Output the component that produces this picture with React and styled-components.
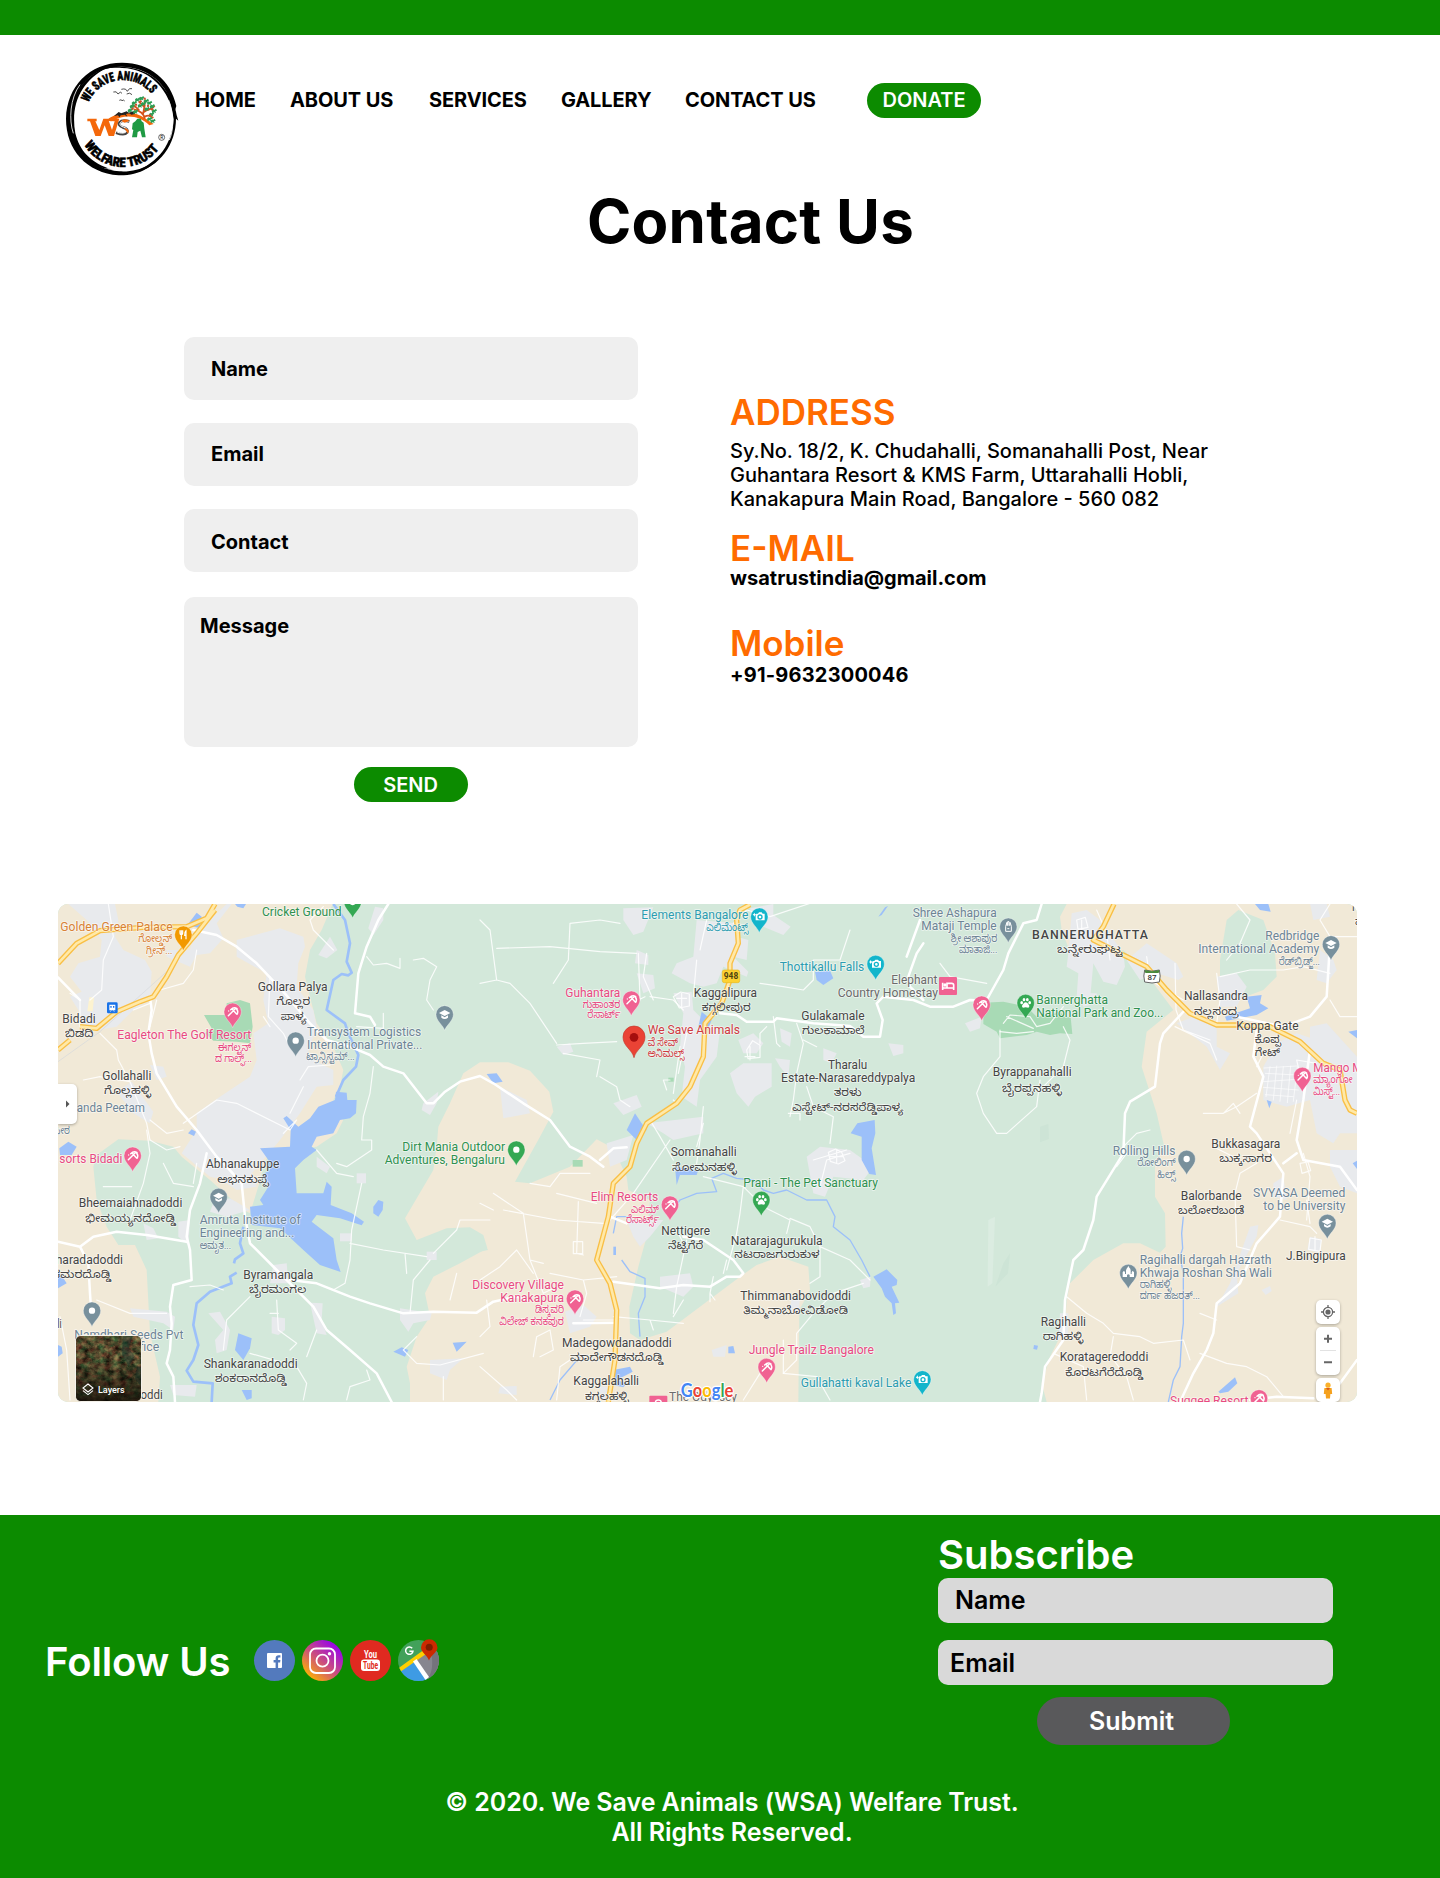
import React from "react";
import styled, { createGlobalStyle, css } from "styled-components";

const GREEN = "#0c8b00";
const ORANGE = "#ff6b00";

const GlobalStyle = createGlobalStyle`
  *, *::before, *::after { box-sizing: border-box; }
  body {
    margin: 0;
    background: #fff;
    color: #000;
    font-family: Inter, "Liberation Sans", sans-serif;
  }
  h1, h2, p { margin: 0; }
  button { border: 0; padding: 0; font-family: inherit; }
`;

/* ---------- page ---------- */

const Page = styled.div`
  display: flex;
  flex-direction: column;
  width: 1440px;
  height: 1878px;
  overflow: hidden;
`;

const TopBar = styled.div`
  flex: none;
  height: 35px;
  background: ${GREEN};
`;

const Header = styled.header`
  display: flex;
  flex: none;
  align-items: flex-start;
  height: 150px;
  padding: 26px 0 0 65px;
`;

const Nav = styled.nav`
  display: grid;
  grid-template-columns: 95px 139px 132px 124px 182px 114px;
  align-items: center;
  margin: 22px 0 0 16px;
`;

const NavLink = styled.a`
  padding-bottom: 2px;
  font-size: 20px;
  font-weight: 700;
  letter-spacing: -0.1px;
  line-height: 24px;
  white-space: nowrap;
`;

const PillButton = styled.button`
  width: 114px;
  height: 35px;
  padding-bottom: ${(p) => (p.$raised ? 2 : 0)}px;
  border-radius: 17.5px;
  background: ${GREEN};
  color: #fff;
  font-size: 20px;
  font-weight: 600;
  line-height: 24px;
`;

const PageTitle = styled.h1`
  flex: none;
  padding-left: 61px;
  font-size: 60px;
  font-weight: 700;
  letter-spacing: 0.25px;
  line-height: 73px;
  text-align: center;
`;

const ContactSection = styled.section`
  display: grid;
  flex: none;
  grid-template-columns: 454px 1fr;
  column-gap: 92px;
  height: 567px;
  padding: 79px 200px 0 184px;
`;

const ContactForm = styled.form`
  display: flex;
  flex-direction: column;
  gap: 23px;
`;

const Field = styled.label`
  display: block;
  height: ${(p) => (p.$area ? 150 : 63)}px;
  margin-top: ${(p) => (p.$area ? 2 : 0)}px;
  padding: ${(p) => p.$top}px 0 0 ${(p) => (p.$area ? 16 : 27)}px;
  border-radius: 10px;
  background: #efefef;
  font-size: 20px;
  font-weight: 700;
  line-height: 24px;
`;

const SendButton = styled(PillButton)`
  align-self: center;
  margin-top: -3px;
  padding-right: 1px;
`;

const Details = styled.div`
  padding-top: 58px;
`;

const DetailHeading = styled.h2`
  margin-bottom: ${(p) => p.$gap}px;
  color: ${ORANGE};
  font-size: 35px;
  font-weight: 600;
  line-height: 34px;
`;

const DetailText = styled.p`
  width: 500px;
  margin-bottom: ${(p) => p.$after}px;
  font-size: 20px;
  font-weight: ${(p) => (p.$strong ? 700 : 500)};
  letter-spacing: ${(p) => p.$spacing || 0}px;
  line-height: 24px;
`;

/* ---------- logo ---------- */

const LogoSvg = styled.svg`
  flex: none;
  display: block;
  width: 114px;
  height: 115px;
`;

const LogoText = styled.text`
  font-family: "Liberation Sans Narrow", "Roboto Condensed", Roboto, sans-serif;
  font-weight: 800;
`;

function Logo() {
  return (
    <LogoSvg viewBox="45 33 342 345" aria-label="We Save Animals Welfare Trust">
      <path
        d="M216 38C300 38 362 90 379 168L374 184C352 100 296 52 214 50C124 50 66 116 63 206C62 296 124 356 208 364C268 368 322 340 350 290C320 352 262 378 206 376C110 368 48 300 48 206C50 110 118 38 216 38Z"
        fill="#000"
      />
      <path d="M60 262C40 180 84 80 170 54C96 92 60 160 76 250C88 300 120 340 190 360C130 352 80 322 60 262Z" fill="#000" />
      <path d="M130 66C180 40 290 40 340 112C364 142 376 170 380 196L385 212L378 206C378 280 330 354 250 368C330 336 366 280 371 208C362 120 300 56 216 54C180 52 150 58 130 66Z" fill="#000" />
      <path d="M90 104C60 144 56 210 70 250M356 150C372 190 372 240 358 270M296 338C262 362 210 366 170 354" fill="none" stroke="#fff" strokeWidth="2.5" />
      <defs>
        <path id="logo-top" d="M115 158A112 112 0 0 1 316 148" />
        <path id="logo-bottom" d="M103 284A134 134 0 0 0 342 270" />
      </defs>
      <LogoText fontSize="38" stroke="#000" strokeWidth="1.6">
        <textPath href="#logo-top" textLength="230" lengthAdjust="spacingAndGlyphs">WE SAVE ANIMALS</textPath>
      </LogoText>
      <LogoText fontSize="39" stroke="#000" strokeWidth="1.6">
        <textPath href="#logo-bottom" textLength="266" lengthAdjust="spacingAndGlyphs">WELFARE TRUST</textPath>
      </LogoText>
      <circle cx="335" cy="262" r="9" fill="none" stroke="#222" strokeWidth="2" />
      <text x="335" y="267" fontSize="14" textAnchor="middle" fontFamily="Roboto, sans-serif">R</text>
      <path d="M190 126q10-4 14 6q8-10 12-2M214 118q14-4 18 6q6-12 14-8M230 132q10-6 16 2M208 151q6-4 8 1q6-4 8 1" fill="none" stroke="#333" strokeWidth="2.6" />
      <path d="M112 206H140V214H136L148 240 160 206H174L186 240 194 214 180 213 186 206H208L192 258H176L164 226 152 258H136L120 214H112Z" fill="#f4680b" />
      <path d="M168 212C200 184 250 180 284 204C296 212 304 218 311 222L298 226C270 198 226 190 184 214Z" fill="#f4680b" />
      <path d="M192 198l14-12 8 4 16-6 8 6-10 2 4 8-8-6-12 2-4 6-4-6zM236 188l14-4 6 8-12 2z" fill="#222" />
      <path d="M238 214C206 206 198 226 218 232C244 238 234 262 198 248" fill="none" stroke="#444" strokeWidth="8" />
      <path d="M236 214C208 208 202 226 220 231C240 236 232 256 202 247" fill="none" stroke="#fff" strokeWidth="3" />
      <path d="M214 213q14-10 24 0l-14 5zM222 233q20 4 12 18" fill="#f4680b" />
      <path d="M262 206l10 0 3 8 6 4 2 18 4 26h-11l-5-20-8 4-2 16h-15l4-22-4-2 2-18 8-6z" fill="#1f9a44" />
      <path d="M284 206C282 190 270 182 252 178M278 196C282 180 286 170 284 152M282 186C296 176 304 180 314 168M268 182C260 170 254 168 246 166M284 172L266 154M284 200C296 194 302 198 310 204" fill="none" stroke="#d4531c" strokeWidth="5.500" />
      <g fill="#2d9e54">
        {[
          [252, 158], [262, 148], [274, 144], [288, 152], [298, 158], [306, 168], [312, 182], [304, 192],
          [246, 168], [240, 180], [256, 184], [270, 166], [290, 176], [298, 206], [308, 212], [280, 160],
        ].map(([x, y], i) => (
          <path key={i} d={`M${x - 7} ${y}l5-4 3 2 5-4 3 6-5 2 2 5-6-2-5 3z`} />
        ))}
      </g>
      <g fill="#c9522a">
        {[[258, 164], [272, 154], [294, 168], [306, 178], [248, 176], [300, 196], [284, 146]].map(([x, y], i) => (
          <circle key={i} cx={x} cy={y} r="3.500" />
        ))}
      </g>
    </LogoSvg>
  );
}

/* ---------- map ---------- */

const MapFrame = styled.section`
  position: relative;
  flex: none;
  width: 1299px;
  height: 498px;
  margin: 79px 0 0 58px;
  border-radius: 10px;
  overflow: hidden;
  background: #d3e8da;
`;

const MapSvg = styled.svg`
  display: block;
  width: 1299px;
  height: 498px;
`;

const LABEL_COLORS = {
  town: "#454545",
  slate: "#6d8496",
  pink: "#e84a82",
  green: "#2f9150",
  teal: "#2c9cb0",
  orange: "#d88135",
  red: "#cf3a3f",
  gray: "#6b6b6b",
};

const MapText = styled.text`
  font-family: Roboto, "Noto Sans Kannada", "Noto Sans", sans-serif;
  font-size: ${(p) => (p.$small ? 33 : 37)}px;
  font-weight: ${(p) => (p.$bold ? 500 : 400)};
  fill: ${(p) => LABEL_COLORS[p.$tone]};
  paint-order: stroke;
  stroke: rgba(255, 255, 255, 0.6);
  stroke-width: 5px;
  stroke-linejoin: round;
`;

// Six map sectors, three units to a pixel; each has its own origin.
const SECTORS = {
  A: [0, 0],
  B: [1290, 0],
  C: [2580, 0],
  D: [0, 750],
  E: [1290, 750],
  F: [2580, 750],
};

// sector, tone, [text, start, end, baseline]...
const LABELS = [
  ["A", "orange", ["Golden Green Palace", 31, 368, 92], ["ಗೋಲ್ಡನ್", 265, 367, 127], ["ಗ್ರೀನ್...", 288, 367, 163]],
  ["A", "green", ["Cricket Ground", 636, 875, 47]],
  ["A", "town", ["Gollara Palya", 623, 833, 273], ["ಗೊಲ್ಲರ", 679, 781, 314], ["ಪಾಳ್ಯ", 692, 770, 360]],
  ["A", "town", ["Bidadi", 37, 137, 370], ["ಬಿಡದಿ", 45, 130, 410]],
  ["A", "pink", ["Eagleton The Golf Resort", 202, 604, 416], ["ಈಗಲ್ಟನ್", 504, 604, 453], ["ದ ಗಾಲ್ಫ್...", 495, 606, 485]],
  ["A", "slate", ["Transystem Logistics", 771, 1114, 409], ["International Private...", 771, 1117, 447], ["ಟ್ರಾನ್ಸಿಸ್ಟಮ್...", 769, 914, 480]],
  ["A", "town", ["Gollahalli", 157, 304, 539], ["ಗೊಲ್ಲಹಳ್ಳಿ", 162, 303, 583]],
  ["A", "slate", ["anda Peetam", 80, 285, 635], ["ಪೀಠ", 10, 60, 703]],
  ["A", "pink", ["sorts Bidadi", 28, 217, 789]],
  ["A", "green", ["Dirt Mania Outdoor", 1057, 1365, 752], ["Adventures, Bengaluru", 1004, 1365, 791]],
  ["B", "teal", ["Elements Bangalore", 484, 805, 56], ["ಎಲಿಮೆಂಟ್ಸ್", 679, 805, 92]],
  ["B", "teal", ["Thottikallu Falls", 899, 1153, 214]],
  ["B", "gray", ["Elephant", 1234, 1372, 251], ["Country Homestay", 1073, 1374, 290]],
  ["B", "pink", ["Guhantara", 256, 421, 290], ["ಗುಹಾಂತರ", 308, 421, 323], ["ರೆಸಾರ್ಟ್", 322, 421, 354]],
  ["B", "town", ["Kaggalipura", 641, 831, 290], ["ಕಗ್ಗಲೀಪುರ", 665, 812, 332]],
  ["B", "red", ["We Save Animals", 503, 780, 402], ["ವೆ ಸೇವ್", 503, 594, 437], ["ಅನಿಮಲ್ಸ್", 503, 613, 471]],
  ["B", "town", ["Gulakamale", 964, 1154, 360], ["ಗುಲಕಾಮಾಲೆ", 966, 1154, 401]],
  ["B", "town", ["Tharalu", 1044, 1162, 508], ["Estate-Narasareddypalya", 903, 1306, 547], ["ತರಳು", 1062, 1145, 587], ["ಎಸ್ಟೇಟ್-ನರಸರೆಡ್ಡಿಪಾಳ್ಯ", 937, 1270, 633]],
  ["B", "town", ["Somanahalli", 572, 770, 769], ["ಸೋಮನಹಳ್ಳಿ", 576, 770, 812]],
  ["C", "slate", ["Shree Ashapura", 8, 260, 51], ["Mataji Temple", 34, 260, 90], ["ಶ್ರೀ ಆಶಾಪುರ", 122, 262, 125], ["ಮಾತಾಜಿ...", 147, 262, 158]],
  ["C", "town", ["BANNERUGHATTA", 366, 714, 117, "caps"], ["ಬನ್ನೇರುಘಟ್ಟ", 441, 638, 160]],
  ["C", "slate", ["Redbridge", 1066, 1228, 121], ["International Academy", 865, 1228, 159], ["ರೆಡ್‌ಬ್ರಿಡ್ಜ್...", 1106, 1230, 194]],
  ["C", "green", ["Bannerghatta", 379, 594, 313], ["National Park and Zoo...", 379, 760, 352]],
  ["C", "town", ["Nallasandra", 822, 1014, 301], ["ನಲ್ಲಸಂದ್ರ", 852, 986, 345]],
  ["C", "town", ["Koppa Gate", 979, 1166, 389], ["ಕೊಪ್ಪ", 1034, 1113, 428], ["ಗೇಟ್", 1034, 1110, 468]],
  ["C", "pink", ["Mango M", 1210, 1357, 517], ["ಮ್ಯಾಂಗೋ", 1210, 1328, 550], ["ಮಿಸ್ಟ್...", 1210, 1290, 584]],
  ["C", "town", ["Byrappanahalli", 248, 485, 529], ["ಬೈರಪ್ಪನಹಳ್ಳಿ", 276, 455, 575]],
  ["C", "slate", ["Rolling Hills", 608, 796, 764], ["ರೋಲಿಂಗ್", 682, 797, 798], ["ಹಿಲ್ಸ್", 742, 797, 834]],
  ["C", "town", ["Bukkasagara", 904, 1111, 744], ["ಬುಕ್ಕಸಾಗರ", 928, 1086, 785]],
  ["C", "town", ["H", 1326, 1348, 32], ["ಹ", 1335, 1362, 74]],
  ["D", "town", ["Abhanakuppe", 468, 688, 55], ["ಅಭನಕುಪ್ಪೆ", 502, 656, 98]],
  ["D", "town", ["Bheemaiahnadoddi", 86, 397, 172], ["ಭೀಮಯ್ಯನದೋಡ್ಡಿ", 106, 377, 216]],
  ["D", "slate", ["Amruta Institute of", 449, 752, 223], ["Engineering and...", 449, 733, 262], ["ಅಮೃತ...", 449, 543, 298]],
  ["D", "town", ["haradadoddi", 17, 219, 342], ["ಕಮರದೊಡ್ಡಿ", 10, 183, 385]],
  ["D", "town", ["Byramangala", 580, 790, 386], ["ಬೈರಮಂಗಲ", 597, 769, 430]],
  ["D", "town", ["li", 22, 35, 533]],
  ["D", "slate", ["Namdhari Seeds Pvt", 73, 400, 566], ["Office", 232, 328, 604]],
  ["D", "town", ["Shankaranadoddi", 461, 743, 653], ["ಶಂಕರಾನದೊಡ್ಡಿ", 495, 709, 697]],
  ["D", "town", ["doddi", 252, 338, 747]],
  ["E", "green", ["Prani - The Pet Sanctuary", 790, 1194, 111]],
  ["E", "pink", ["Elim Resorts", 332, 535, 154], ["ಎಲಿಮ್", 453, 537, 188], ["ರೆಸಾರ್ಟ್ಸ್", 438, 537, 219]],
  ["E", "town", ["Nettigere", 544, 690, 256], ["ನೆಟ್ಟಿಗೆರೆ", 564, 670, 298]],
  ["E", "town", ["Natarajagurukula", 752, 1028, 284], ["ನಟರಾಜಗುರುಕುಳ", 763, 1019, 325]],
  ["E", "pink", ["Discovery Village", -23, 252, 416], ["Kanakapura", 61, 252, 455], ["ಡಿಸ್ಕವರಿ", 165, 252, 489], ["ವಿಲೇಜ್ ಕನಕಪುರ", 58, 252, 525]],
  ["E", "town", ["Thimmanabovidoddi", 781, 1113, 449], ["ತಿಮ್ಮನಾಬೋವಿಡೋಡಿ", 790, 1104, 492]],
  ["E", "town", ["Madegowdanadoddi", 246, 575, 591], ["ಮಾದೇಗೌಡನದೊಡ್ಡಿ", 270, 549, 634]],
  ["E", "pink", ["Jungle Trailz Bangalore", 806, 1182, 613]],
  ["E", "town", ["Kaggalahalli", 280, 477, 706], ["ಕಗ್ಗಲಹಳ್ಳಿ", 315, 446, 751]],
  ["E", "gray", ["The Odyssey", 567, 771, 754]],
  ["E", "teal", ["Gullahatti kaval Lake", 962, 1294, 710]],
  ["F", "town", ["Balorbande", 812, 995, 149], ["ಬಲೋರಬಂಡೆ", 804, 1003, 192]],
  ["F", "slate", ["SVYASA Deemed", 1029, 1306, 141], ["to be University", 1060, 1306, 180]],
  ["F", "town", ["J.Bingipura", 1128, 1307, 331]],
  ["F", "slate", ["Ragihalli dargah Hazrath", 689, 1084, 341], ["Khwaja Roshan Sha Wali", 689, 1086, 380], ["ರಾಗಿಹಳ್ಳಿ", 689, 784, 414], ["ದರ್ಗಾ ಹಜರತ್...", 689, 870, 446]],
  ["F", "town", ["Ragihalli", 392, 528, 528], ["ರಾಗಿಹಳ್ಳಿ", 398, 520, 570]],
  ["F", "town", ["Koratageredoddi", 449, 715, 633], ["ಕೊರಟಗೆರೆದೊಡ್ಡಿ", 466, 699, 678]],
  ["F", "pink", ["Suggee Resort", 780, 1015, 766]],
];

const PIN_COLORS = { pink: "#f06292", slate: "#78909c", green: "#34a853", teal: "#12b5cb", orange: "#f29900" };

const GLYPHS = {
  dot: <circle r="9.5" fill="#fff" />,
  cap: (
    <g fill="#fff">
      <path d="M-17-4L0-13 17-4 0 5z" />
      <path d="M-10 3v7q10 8 20 0V3L0 9z" />
    </g>
  ),
  golf: (
    <g fill="none" stroke="#fff" strokeWidth="4.5" strokeLinecap="round">
      <path d="M-13 12L8-9M-6-6Q4-16 13-9M12-8q6 8 1 16M-2-8l13 14" />
      <circle cx="-12" cy="-2" r="2" fill="#fff" stroke="none" />
    </g>
  ),
  camera: (
    <g>
      <path d="M-9-9h5l3-4h8l3 4h6v20h-27v-15" fill="#fff" />
      <circle cx="2" cy="1" r="6" fill="none" stroke="#12b5cb" strokeWidth="4" />
      <path d="M-15-12l2 4 4 2-4 2-2 4-2-4-3-2 3-2z" fill="#fff" />
    </g>
  ),
  paw: (
    <g fill="#fff">
      <ellipse cx="-12" cy="-1" rx="4" ry="5" />
      <ellipse cx="-5" cy="-10" rx="4" ry="5" />
      <ellipse cx="5" cy="-10" rx="4" ry="5" />
      <ellipse cx="12" cy="-1" rx="4" ry="5" />
      <path d="M0-2q5 0 8 6q6 7 0 10q-8-3-16 0q-6-3 0-10q3-6 8-6z" />
    </g>
  ),
  fork: (
    <g fill="none" stroke="#fff" strokeWidth="3.5">
      <path d="M-10-13v9q0 4 4 4t4-4v-9M-6-13V14M8 14V-12q-5 4-4 14h4" />
    </g>
  ),
  hand: (
    <g fill="none" stroke="#fff" strokeWidth="3">
      <path d="M-8 14v-15l4-12v10M-2-3v-12h4v12M4-3l1-10 4 12v15M-8 14H9M-3 6h6" />
    </g>
  ),
  mosque: <path d="M-17 12V-2l4-5 3 5v5h3v-11q2-6 5-9l2-5 2 5q5 4 5 9v11h3v-5l3-5 4 5v14H4V6q-4-5-8 0v6z" fill="#fff" />,
};

// sector, colour, glyph, tip x, tip y
const PINS = [
  ["A", "orange", "fork", 400, 152], ["A", "pink", "golf", 548, 383], ["A", "slate", "dot", 737, 470],
  ["A", "slate", "cap", 1184, 391], ["A", "green", "dot", 908, 54], ["B", "teal", "camera", 838, 98],
  ["B", "teal", "camera", 1187, 240], ["B", "pink", "golf", 454, 347], ["C", "slate", "hand", 295, 128],
  ["C", "pink", "golf", 215, 362], ["C", "green", "paw", 347, 357], ["C", "slate", "cap", 1263, 181],
  ["C", "pink", "golf", 1177, 576], ["D", "pink", "golf", 248, 65], ["D", "slate", "cap", 506, 189],
  ["D", "slate", "dot", 126, 530], ["E", "green", "dot", 109, 47], ["E", "pink", "golf", 570, 212],
  ["E", "green", "paw", 844, 198], ["E", "pink", "golf", 285, 494], ["E", "pink", "golf", 860, 699],
  ["F", "slate", "dot", 830, 75], ["F", "slate", "cap", 1252, 267], ["F", "slate", "mosque", 655, 417],
  ["F", "teal", "camera", 37, 736], ["F", "pink", "golf", 1047, 793],
];

const SAND = [
  "M24 12H848L815 90 780 150 765 230 800 370 850 440 880 510 870 560 850 600 880 660 860 700 800 740 655 765 640 800 628 850 600 940 580 930 480 840 395 770 370 740 300 722 205 718 140 765 130 800 140 900 170 980 205 1035 255 1035 290 1110 300 1300 330 1430 325 1506H24Z",
  "M1160 740L1165 680 1200 610 1240 520 1290 487 1375 487 1440 512 1498 575 1510 635 1470 710 1395 845 1440 850 1560 800 1640 718 1690 745 1730 830 1735 870 1800 900 1790 1010 1765 1100 1738 1220 1740 1300 1770 1320 1850 1295 1950 1220 2070 1130 2120 1095 2190 1070 2275 1100 2280 1170 2248 1230 2245 1506H1080L1080 1450 1070 1400 1100 1310 1140 1250 1125 1180 1150 1130 1230 1090 1312 1045 1300 1005 1260 982 1190 985 1100 1020 1065 955 1150 810Z",
  "M3050 12L3030 50 3035 90 3050 130 3070 180 3220 150 3280 210 3370 330 3290 395 3275 500 3320 640 3345 750 3315 780 3315 890 3345 940 3347 1040 3330 1058 3270 1030 3220 1030 3130 1080 3060 1150 3050 1200 3045 1280 3000 1370 2975 1450 2990 1506H3921V12Z",
];
const MEADOW = [
  "M3565 30L3640 60 3675 160 3680 230 3640 270 3560 300 3510 270 3510 180 3530 60Z",
  "M1290 1005L1314 1050 1290 1055Z",
];
const PARK = [
  "M462 345L530 345 530 310 570 300 600 310 608 380 600 430 560 425 490 422 465 400 485 385Z",
  "M2800 308L2860 305 2930 320 2960 350 3000 345 3030 335 3045 352 3062 352 3067 402 3030 400 3000 405 2960 395 2930 405 2850 415 2840 395 2800 372Z",
  "M1568 780H1598V800H1568Z", "M3700 585l14 2-2 16h-14z", "M1855 533h16v12h-16z",
];
const URBAN = [
  "M55 12L195 12 205 60 195 110 220 150 285 180 305 215 300 300 250 330 200 380 110 395 85 330 60 290 95 275 60 230 85 190 150 170 155 120 110 60Z",
  "M350 150L420 150 435 105 480 60 530 12 545 12 500 70 520 115 480 160 440 165 420 200 350 170Z",
  "M560 120L690 85 760 110 765 140 745 190 740 260 790 330 800 380 770 470 850 510 850 555 800 560 750 640 690 720 580 850 480 830 395 760 440 690 440 640 510 590 600 530 620 480 610 400 655 370 640 300 650 220 560 170Z",
  "M300 495L340 500 350 530 320 540Z",
  "M975 20L1000 25 1000 60 970 105 955 85Z", "M840 110L862 150 830 175 805 165Z",
  "M1120 610L1165 575 1160 610 1140 645 1115 630Z", "M200 575L245 545 310 635 300 670 250 640Z",
  "M480 800L600 800 620 860 560 870 500 830Z", "M490 910L540 895 600 930 530 950 480 935Z",
  "M280 970L310 985 325 1015 290 1020Z", "M385 965L420 960 415 1035 385 1010Z",
  "M240 1225L350 1235 375 1250 370 1290 340 1270 250 1250Z", "M475 1240L510 1235 540 1290 530 1350 500 1360 495 1320 520 1290Z",
  "M665 1250L705 1255 705 1290 685 1305 665 1300Z", "M780 1208L818 1210 815 1260 830 1305 800 1300Z",
  "M670 1095L710 1090 715 1150 660 1150Z", "M1050 1225L1145 1240 1140 1260 1090 1270 1075 1295 1050 1260Z",
  "M1140 1380L1240 1375 1200 1410 1190 1440 1140 1420Z", "M360 1455L440 1455 435 1490 370 1485Z",
  "M800 770L840 800 830 820 800 800Z", "M920 820h28v30h-28z", "M870 1000h35v24h-35z", "M1130 1055h30v25h-30z",
  "M1720 25L1810 22 1780 95 1750 105 1720 60Z", "M1940 60L2060 70 2060 110 2095 120 2090 180 2050 170 2095 215 2090 230 2020 200 2000 250 1960 260 1920 250 1865 220 1880 190 1930 170Z",
  "M2100 25L2170 12 2170 45 2222 80 2200 105 2140 80 2110 60Z",
  "M1760 150L1795 165 1795 195 1755 190Z", "M1760 220L1810 225 1815 265 1780 280Z",
  "M1870 280L1925 275 1930 330 1960 360 2010 390 2000 470 1950 540 1940 620 1895 590 1905 500 1890 440 1900 340Z",
  "M2040 520L2080 490 2165 490 2165 560 2115 590 2095 620 2060 580Z", "M2065 420L2110 400 2140 430 2120 460 2080 460Z",
  "M2190 385L2225 400 2220 440 2195 425Z", "M2175 475L2220 480 2215 530 2190 500Z", "M2320 445L2360 460 2345 490 2320 480Z",
  "M2515 430L2560 435 2560 460 2530 468Z", "M1520 440L1560 430 1570 455 1540 465Z",
  "M1350 560L1430 600 1440 640 1360 655Z", "M1690 610L1760 585 1775 620 1720 645Z", "M1790 670L1960 650 1960 700 1870 720 1840 700Z",
  "M1670 730L1750 705 1730 780 1680 800Z", "M2270 770L2310 740 2400 750 2470 800 2440 840 2350 830 2325 890 2290 880Z",
  "M1730 960L1840 960 1800 1010 1770 1040 1750 1010Z", "M1830 1130L1920 1120 1930 1160 1900 1190 1830 1160Z",
  "M1545 1235L1600 1215 1640 1250 1620 1280 1560 1300Z", "M2225 1190L2250 1195 2245 1240 2220 1230Z", "M2430 1140L2462 1130 2460 1160 2440 1165Z",
  "M1350 1460L1400 1458 1400 1485 1345 1480Z", "M1985 1350L2030 1335 2025 1370 1990 1370Z", "M1650 1460h40v40h-40z",
  "M3065 40L3110 30 3150 60 3220 160 3225 200 3200 255 3160 245 3130 190 3120 300 3080 290 3085 220 3050 200 3055 160Z",
  "M3230 180L3290 130 3380 190 3400 230 3385 240 3320 220 3270 240Z",
  "M3380 370L3430 350 3500 380 3500 440 3540 460 3510 510 3470 440Z",
  "M3640 500L3680 430 3740 400 3800 420 3790 520 3780 600 3710 620 3640 600Z",
  "M3780 380L3830 370 3921 470 3921 700 3870 700 3850 730 3800 700 3780 600Z",
  "M3810 150L3850 180 3860 210 3830 250 3800 240Z", "M3780 10L3830 12 3840 50 3790 60Z", "M3500 230L3560 220 3590 260 3560 320 3510 320Z",
  "M2745 370L2795 350 2790 385 2760 395Z", "M3090 280L3140 280 3140 310 3100 320Z",
  "M3840 750L3921 750 3921 880 3870 860 3840 800Z", "M3670 850L3700 830 3710 900 3670 890Z",
  "M3600 980L3625 975 3620 1010 3560 1120 3565 1180 3500 1220 3540 1150Z", "M3780 1010l35 8-5 40-38-8z",
  "M3030 1240L3055 1240 3055 1300 3025 1320Z", "M3635 1170l25-12 5 15-18 12z",
];
const WATER = [
  "M630 745L720 740 722 690 700 655 710 648 745 680 780 655 805 620 855 600 858 575 890 578 892 600 920 600 918 640 900 655 870 660 850 700 800 710 785 740 800 750 760 780 735 805 740 880 820 880 830 845 845 860 842 915 905 940 942 965 935 976 870 955 800 945 785 965 850 1015 860 1080 872 1116 810 1095 760 1050 690 985 605 975 600 920 640 915 630 900 655 860 635 825 660 810 655 780Z",
  "M555 12H588L580 25 562 20Z", "M412 75L440 38 455 50 450 85Z", "M414 700L425 688 438 695 432 708Z",
  "M28 745L55 725 80 740 65 765 30 765Z", "M970 920L985 900 1000 905 998 930 985 950 970 940Z",
  "M24 1110L50 1150 24 1165Z", "M24 1335L35 1340 38 1360 24 1370Z",
  "M565 1300L605 1315 600 1345 580 1380 555 1350Z", "M575 1470L605 1470 605 1495 590 1500Z",
  "M1030 1355L1055 1342 1075 1350 1065 1370Z", "M1208 1328L1250 1325 1220 1355Z",
  "M1310 522L1340 520 1358 545 1330 550Z", "M1945 380L1955 335 1985 360 1975 385Z",
  "M1730 690L1755 640 1775 670 1790 690 1770 705 1765 725Z",
  "M2295 215L2340 212 2350 235 2320 255 2300 240Z", "M2485 50L2505 22 2514 18 2495 45Z",
  "M2402 700L2422 670 2474 660 2476 700 2465 745 2478 825 2458 822 2435 780 2435 710Z",
  "M1875 800L1945 810 1940 825 1890 825 1880 855Z",
  "M2470 1130L2510 1108 2542 1140 2540 1155 2525 1160 2548 1208 2535 1210 2538 1240 2530 1245 2525 1210 2505 1190 2495 1165Z",
  "M1690 1410L1740 1400 1748 1415 1700 1440 1730 1450 1720 1462 1690 1455Z", "M2035 1340L2050 1338 2055 1360 2035 1360Z",
  "M3615 12L3655 12 3662 35 3630 30Z", "M3525 350L3600 325 3590 290 3635 285 3630 310 3655 325 3620 345 3530 362Z",
  "M3895 395L3921 390 3921 415Z", "M3650 600L3665 605 3658 625Z", "M3505 1475L3555 1432 3562 1450 3535 1475 3510 1480Z",
  "M2952 1335l12 2-3 12-11-2z", "M3908 790l13-8v25z", "M1690 1040h8v25h-8z",
];
const RIVERS = [
  ["M850 12L885 60 900 130 890 185 905 218 895 226 875 222 850 240 830 330 885 370 895 400 925 465 918 500 880 540 858 590", 8],
  ["M580 980L570 1030 580 1060 555 1078 552 1090M560 1118L540 1130 545 1150 480 1175 440 1210 430 1275 445 1335 430 1380 410 1412 430 1445 488 1450 485 1506", 8],
  ["M1860 940L1890 900 1940 880 2000 875 1985 835 2020 820 2060 835 2110 840 2140 870 2170 880 2210 870 2270 900 2330 900 2355 950 2350 980 2400 1020 2435 1080 2460 1130", 4],
  ["M1690 1000L1700 950 1740 950 1750 970M1715 1080L1740 1115 1785 1135 1785 1190 1765 1240 1770 1310M1500 1500L1530 1440 1590 1370", 4],
  ["M3400 950L3395 1000 3398 1045 3390 1070 3400 1120 3400 1270 3395 1310 3390 1400 3370 1440 3355 1506", 4],
];
const MINOR = [
  "M175 12L190 110 160 180 155 270 120 300M60 280L90 300 90 380M330 270L400 250 430 210 440 150M300 380L320 300",
  "M150 400L200 450 205 480 240 545 290 670 300 720M100 540L150 530 240 545M250 330L300 310",
  "M820 20L780 60 790 90 850 150M660 230L655 350 700 400 720 440M660 380L640 350",
  "M950 170L970 195 1010 190 1050 205 1050 175M1090 180L1120 175 1160 200 1140 240 1130 300 1150 330",
  "M920 380L1000 385 1000 340M970 500L960 580 940 650 935 720 965 720 965 750 890 800 860 790M750 540L775 500 840 495",
  "M400 670L500 600 560 610 720 690 740 660 700 700M300 660L350 700 400 690M300 720L350 750 390 740M720 640L760 560",
  "M290 690L300 760 280 850 240 960M160 860L245 860M340 790L370 850 430 860M430 850L440 790M800 750L860 820 910 830",
  "M935 850L905 990 900 1080 885 1150 850 1170M900 1030L1000 1050 1130 1070M1140 1080L1090 1140 1080 1240M1065 1060L1070 1120M1150 1060L1220 990 1230 960 1320 960",
  "M420 1160L480 1155 520 1170M520 1350L530 1260 600 1190M680 1200L685 1290 740 1330 720 1350M660 1240L685 1240M770 1370L800 1290M600 1360L740 1400 770 1450 760 1500",
  "M140 1200L240 1240 350 1240M30 1250L50 1350 60 1500M950 1410L960 1440 900 1460 890 1500M1100 1310L1060 1350 1100 1390 1170 1395 1300 1360M1220 1120L1200 1200M1180 1430L1180 1500",
  "M1290 60L1320 90 1340 240 1380 250 1440 310 1480 370 1520 430M1340 240L1290 250M1510 250L1555 180 1560 70M1560 70L1650 60 1710 70M1340 145L1500 140 1650 155 1760 160",
  "M1520 435L1600 430 1700 425M1540 460L1650 480 1640 530M1650 530L1700 560 1710 600 1740 620M1765 160L1770 300M1790 160L1780 230 1810 300M1765 300L1785 290",
  "M1800 290L1870 300 1900 330M1940 180L1930 290M1950 150L1970 60M1885 520L1910 400M1870 580L1890 440M1860 540L1840 540 1850 570M1880 610L1870 600",
  "M2050 70L2090 30 2160 50 2280 10M2130 250L2200 260 2260 270 2290 240 2290 180 2370 180 2400 90M2170 350L2180 430 2190 440",
  "M2150 380L2130 400 2130 430M2240 370L2260 430 2240 520 2230 600 2220 650M2300 440L2260 420M2270 560L2290 620 2350 650 2340 730",
  "M2090 450l18-28 22 14v36l-36 4zM2085 470h30M2100 440v40M1870 290l22-14 26 6v36l-30 6zM1880 295h30M1895 280v40M2215 640h35v20",
  "M1800 660L1830 710 1870 780M1960 620L1950 720 1940 790M1860 720L1750 880 1680 960M1940 740L1960 670",
  "M1960 830L2080 860 2070 940 2060 1000 2030 1110M2080 860L2140 920 2220 960 2210 1000M2220 955L2280 980 2310 1040 2310 1130 2280 1150M2310 1040L2400 1080 2460 1140M2440 1150L2350 1180 2290 1240 2240 1300 2240 1380 2200 1420",
  "M1870 1240L1880 1160 1910 1020M1900 1030L1880 990M1870 1250L1900 1200M1990 1130L1980 1180 1995 1200M2020 1120L2030 1080M1690 1250L1800 1260 1900 1270M1800 1260L1810 1290M1980 1180v25",
  "M1330 880L1420 940 1440 1080 1480 1090M1360 930L1520 960 1660 970M1585 905L1580 1060 1600 1065M1520 880L1640 910M1440 1080L1480 1180 1520 1160M1570 1025h28v36h-28z",
  "M1290 1140L1350 1100 1400 1050 1450 1120M1500 1120L1600 1140 1700 1130M1450 1370L1460 1310 1500 1290 1510 1350 1470 1370M1600 1260L1700 1260M1590 1250L1610 1180 1600 1140",
  "M1440 850L1500 860 1530 820 1620 820M1290 910L1330 930M1290 1310L1320 1280 1310 1200M1520 1500L1530 1400 1560 1380M2130 1420L2080 1500M2200 1420L2300 1430 2340 1500M2200 1320L2200 1420M1400 1500L1370 1470 1290 1400",
  "M2290 780L2390 750M2310 860L2330 780 2400 760M2335 757l22-10 18 10 10 25-20 10-24-8zM2340 770h40M2360 750v38",
  "M2670 190L2700 230 2810 250M2670 250L2700 260M2860 370L2880 345 2940 350 2960 380 3000 370 3040 320M2850 395L2900 400 2950 395M2870 350L2950 385",
  "M2850 390L2850 470 2800 530 2780 580 2800 640 2840 700 2870 700 2960 620 2970 540M3040 380L3060 420 3040 500 2980 560",
  "M3080 60l26-8 8 30-30 6zM3095 60v30M3140 30L3170 100 3180 180M3290 170L3300 240 3400 300M3375 190L3378 330 3400 390 3480 420M3375 380L3480 430 3500 480",
  "M3500 220L3510 300 3500 370M3510 230L3600 210 3700 210 3760 200 3840 220M3560 12L3600 60 3570 130 3530 180M3840 12L3810 60 3840 110 3921 110M3840 300L3870 350 3921 350",
  "M3460 640L3520 640 3560 620 3620 580M3520 640L3550 610 3570 640M3740 600L3720 700M3760 570L3740 480 3800 490M3750 790l24-4 8 26-26 8zM3760 760L3780 830 3770 960M3620 500L3640 460",
  "M3570 820L3555 880 3560 1040 3600 1050M3620 790L3570 820M3690 960L3780 980 3800 1000M3780 970L3770 900M3780 1014l34 6-4 34-34-6zM3795 1010v40",
  "M3050 1190L3110 1240 3160 1270 3190 1300 3270 1310 3310 1330 3400 1320 3420 1380M3190 1310L3180 1370M3190 1380L3230 1430 3250 1500M3010 1360L3100 1400 3110 1500M3450 1240L3500 1260M3450 1360L3530 1390 3590 1400 3650 1430 3700 1490",
  "M3210 750L3260 700 3300 690M3200 800L3230 760M3490 740L3550 770",
];
const LANES =
  "M3642 504L3740 498M3646 520L3760 526M3640 545L3770 536M3640 562L3745 570M3646 584L3730 590M3660 500L3648 590M3680 498L3670 600M3700 500L3690 604M3722 498L3712 608M3742 500L3730 604";
const MAJOR = [
  "M24 232L90 300M430 90L500 105 560 140 620 190 700 275 780 370 830 420 900 440 960 465 1000 500 1060 520 1130 610 1150 610 1185 575 1230 545 1290 528 1330 550 1420 610 1500 660 1560 740 1620 770 1660 800",
  "M300 290L305 330 295 400 305 460 320 520 380 620 440 690 500 770 530 800 575 850 585 950 600 1030 680 1110 790 1220 830 1290 900 1350 980 1420 1025 1506",
  "M1015 12L985 60 950 140 925 220 915 340 960 350 975 375",
  "M470 760L450 850 420 930 410 1010 420 1050 425 1140 370 1155 360 1220 365 1270 360 1350 350 1390 370 1430 375 1506",
  "M24 1025L90 1040 130 1010 200 995 290 1005 410 1025M90 1040L115 1090 120 1180 126 1270",
  "M720 1140L800 1150 900 1190 960 1210 1060 1240 1150 1235 1280 1238 1330 1205 1400 1190 1430 1200",
  "M2010 340L2060 345 2090 365 2170 365 2180 355 2290 370 2400 378 2440 410 2490 410 2498 360 2480 310 2500 290 2590 300 2640 320 2710 320 2760 300 2810 302",
  "M2810 300L2860 210 2875 160 2920 70 2960 60 2975 12M2620 300L2580 260 2575 230 2600 160 2620 130M2570 170L2610 60",
  "M3405 330L3340 400 3330 430 3315 560 3240 605 3225 640 3220 760 3140 890 3130 960 3100 1050 3070 1080 3045 1200 3040 1320 2985 1400 2975 1480 2970 1506",
  "M3620 390L3610 470 3640 530 3600 680 3620 700 3700 820 3690 950 3620 1030 3570 1150 3500 1210 3490 1300 3470 1350 3430 1420 3390 1506",
  "M3840 130L3830 290 3780 350 3700 380 3560 350M3780 450L3760 600 3740 720 3760 780 3870 800 3921 870M3700 790L3740 760",
  "M1680 950L1730 970M1900 1010L1960 1020 2050 1080 2080 1120 2070 1130 2030 1130 1980 1160 1900 1155 1830 1165 1690 1145M1570 1270L1700 1268",
  "M3600 1500L3680 1490 3790 1495M3870 1450L3921 1380M1730 742L1690 745 1650 780",
];
const HIGHWAYS = [
  "M24 190L80 130 150 92 280 82 410 80 470 55 495 12M495 30L440 100 385 165 350 230 310 290 270 305 200 335 140 385 90 380M24 450L60 420",
  "M2100 14L2070 30 2060 60 2065 130 2040 190 2040 240 2015 310 1965 370 1960 470 1920 560 1880 610 1790 670 1760 730 1740 800 1690 850 1675 950 1640 1080 1680 1150 1700 1230 1695 1380 1675 1506",
  "M3192 12L3160 80 3130 120 3200 155 3290 200 3350 270 3420 340 3500 375 3560 375 3660 380 3750 425 3820 490 3870 510 3885 600 3900 630 3921 640",
];

function Pin({ tone, glyph, x, y }) {
  return (
    <g transform={`translate(${x} ${y})`}>
      <path d="M0 0C-5-16-26-28-26-48A26 26 0 0 1 26-48C26-28 5-16 0 0Z" fill={PIN_COLORS[tone]} stroke="#fff" strokeOpacity=".5" strokeWidth="2" />
      <g transform="translate(0 -48)">{GLYPHS[glyph]}</g>
    </g>
  );
}

const GoogleMark = styled.text`
  font-family: Lato, "Open Sans", sans-serif;
  font-size: 54px;
  font-weight: 700;
  paint-order: stroke;
  stroke: #fff;
  stroke-width: 7px;
  stroke-linejoin: round;
`;

function MapDrawing() {
  return (
    <MapSvg viewBox="24 12 3897 1494">
      <rect x="24" y="12" width="3897" height="1494" fill="#d3e8da" />
      <g fill="#f1e9d7">{SAND.map((d) => <path key={d} d={d} />)}</g>
      <g fill="#d3e8da">{MEADOW.map((d) => <path key={d} d={d} />)}</g>
      <g fill="#a8dab5">{PARK.map((d) => <path key={d} d={d} />)}</g>
      <g fill="#e8eaed">{URBAN.map((d) => <path key={d} d={d} />)}</g>
      <path d="M2860 1090l20-30-6 60-38 40zM2970 680l25-8 2 45-27 10z" fill="#cde4d6" />
      <path d="M2815 960l20-10-8 200-14 10z" fill="#dbece1" />
      <path d="M118 292h14l-4 42h-16z" fill="#fdf3d0" />
      <g fill="#9cc0f9">{WATER.map((d) => <path key={d} d={d} />)}</g>
      <g fill="none" stroke="#9cc0f9" strokeLinejoin="round">
        {RIVERS.map(([d, w]) => <path key={d} d={d} strokeWidth={w} />)}
      </g>
      <g fill="none" stroke="#fff" strokeLinejoin="round" strokeLinecap="round">
        {MINOR.map((d) => <path key={d} d={d} strokeWidth="3.6" strokeOpacity=".85" />)}
        <path d={LANES} strokeWidth="2.4" strokeOpacity=".8" />
        {MAJOR.map((d) => <path key={d} d={d} strokeWidth="7.5" />)}
      </g>
      <path d="M24 485L150 395 350 215" fill="none" stroke="#d5d8dc" strokeWidth="2" />
      <g fill="none" strokeLinejoin="round">
        {HIGHWAYS.map((d) => <path key={d} d={d} stroke="#f9bf45" strokeWidth="16" />)}
        {HIGHWAYS.map((d) => <path key={d} d={d} stroke="#ffe9a8" strokeWidth="8" />)}
      </g>

      <g transform="translate(187 323)">
        <rect x="-16" y="-16" width="32" height="33" rx="4" fill="#1a73e8" />
        <path d="M-9-9h18v17H-9z" fill="#fff" />
        <path d="M-6-5h4v5h-4zM2-5h4v5H2z" fill="#1a73e8" />
        <path d="M-6 12l3-4M6 12l-3-4" stroke="#fff" strokeWidth="2" />
      </g>
      <g transform="translate(2043 229)">
        <rect x="-26" y="-19" width="52" height="38" rx="6" fill="#fdd131" stroke="#e9b91e" strokeWidth="2" />
        <text y="9" fontSize="25" fontWeight="700" fontFamily="Roboto, sans-serif" textAnchor="middle" fill="#4d4210">948</text>
      </g>
      <g transform="translate(3306 228)">
        <path d="M-22-18Q0-11 22-18Q27 0 22 18Q0 24-22 18Q-27 0-22-18Z" fill="#fff" stroke="#666" strokeWidth="3" />
        <path d="M-22-18Q0-11 22-18L20-9H-20Z" fill="#4b8a3c" />
        <text y="11" fontSize="24" fontWeight="500" fontFamily="Roboto, sans-serif" textAnchor="middle" fill="#333">87</text>
      </g>
      <g transform="translate(2694 258)">
        <rect x="-27" y="-27" width="54" height="54" rx="3" fill="#f06292" />
        <path d="M-16-10v22M-16 6h33v6M17 4v-7q0-5-6-5H-3V4" fill="none" stroke="#fff" strokeWidth="5" />
        <circle cx="-9" cy="-3" r="5" fill="#fff" />
      </g>
      <g transform="translate(1825 1514)">
        <rect x="-27" y="-27" width="54" height="54" rx="3" fill="#f06292" />
        <circle cy="-5" r="9" fill="none" stroke="#fff" strokeWidth="4" />
      </g>

      {LABELS.map(([sector, tone, ...lines]) => (
        <g key={sector + lines[0][0]} transform={`translate(${SECTORS[sector].join(" ")})`}>
          {lines.map(([text, from, to, base, kind]) => (
            <MapText
              key={text}
              x={from}
              y={base}
              textLength={to - from}
              lengthAdjust={kind === "caps" ? "spacing" : "spacingAndGlyphs"}
              $tone={tone}
              $bold={kind === "caps"}
              $small={text.charCodeAt(0) > 0xc00}
            >
              {text}
            </MapText>
          ))}
        </g>
      ))}

      {PINS.map(([sector, tone, glyph, x, y]) => (
        <Pin key={sector + x} tone={tone} glyph={glyph} x={x + SECTORS[sector][0]} y={y + SECTORS[sector][1]} />
      ))}
      <g transform="translate(1752 473)">
        <path d="M0 0C-5-24-33-34-33-62A33 33 0 0 1 33-62C33-34 5-24 0 0Z" fill="#ea4335" stroke="#c5372c" strokeWidth="2" />
        <circle cy="-61" r="13" fill="#a50e0e" />
      </g>
      <GoogleMark x="1892" y="1490" textLength="158" lengthAdjust="spacingAndGlyphs">
        <tspan fill="#4285f4">G</tspan>
        <tspan fill="#ea4335">o</tspan>
        <tspan fill="#fbbc04">o</tspan>
        <tspan fill="#4285f4">g</tspan>
        <tspan fill="#34a853">l</tspan>
        <tspan fill="#ea4335">e</tspan>
      </GoogleMark>
    </MapSvg>
  );
}

const mapButton = css`
  display: flex;
  align-items: center;
  justify-content: center;
  background: #fff;
  box-shadow: 0 1px 3px rgba(0, 0, 0, 0.3);
`;

const PanelToggle = styled.button`
  ${mapButton}
  position: absolute;
  top: 180px;
  left: 0;
  width: 19px;
  height: 40px;
  border-radius: 0 5px 5px 0;
`;

const MapControls = styled.div`
  position: absolute;
  top: 396px;
  right: 17px;
  display: flex;
  flex-direction: column;
  gap: 3px;
`;

const MapControl = styled.button`
  ${mapButton}
  width: 24px;
  height: 24px;
  border-radius: 5px;
`;

const ZoomControl = styled.div`
  ${mapButton}
  flex-direction: column;
  width: 24px;
  height: 48px;
  border-radius: 5px;
`;

const LayersButton = styled.button`
  position: absolute;
  bottom: 0;
  left: 17px;
  display: flex;
  align-items: flex-end;
  width: 67px;
  height: 67px;
  padding: 0 0 5px 6px;
  overflow: hidden;
  border: 1.5px solid #f4f1ea;
  border-radius: 6px;
  background: #3c3427;
  color: #fff;
  font-family: Roboto, sans-serif;
  font-size: 9px;
  font-weight: 500;
  line-height: 12px;
`;

const Terrain = styled.svg`
  position: absolute;
  inset: 0;
  width: 100%;
  height: 100%;
`;

const LayersLabel = styled.span`
  position: relative;
  display: flex;
  align-items: center;
  gap: 4px;
`;

function LayerTile() {
  return (
    <LayersButton type="button">
      <Terrain viewBox="0 0 64 64" preserveAspectRatio="none">
        <defs>
          <filter id="terrain" x="0" y="0" width="100%" height="100%" colorInterpolationFilters="sRGB">
            <feTurbulence type="fractalNoise" baseFrequency="0.14 0.18" numOctaves="4" seed="7" />
            <feColorMatrix values="0.75 0.35 0 0 -0.24  0.3 0.6 0 0 -0.17  0.25 0.35 0 0 -0.13  0 0 0 0 1" />
          </filter>
          <linearGradient id="terrain-shade" x1="0" y1="0" x2="0" y2="1">
            <stop offset=".35" stopColor="#100c06" stopOpacity="0" />
            <stop offset="1" stopColor="#100c06" stopOpacity=".75" />
          </linearGradient>
        </defs>
        <rect width="64" height="64" filter="url(#terrain)" />
        <path d="M46 0h10l-4 12 6 8-6 10-7-12zM60 30l4 0v20l-6-8z" fill="#17352f" opacity=".45" />
        <rect width="64" height="64" fill="url(#terrain-shade)" />
      </Terrain>
      <LayersLabel>
        <svg width="12" height="13" viewBox="0 0 12 13" fill="none" stroke="#fff" strokeWidth="1.1">
          <path d="M6 1L11 5 6 9 1 5zM1 7.6L6 11.6 11 7.6" />
        </svg>
        Layers
      </LayersLabel>
    </LayersButton>
  );
}

function LocationMap() {
  return (
    <MapFrame>
      <MapDrawing />
      <PanelToggle type="button" aria-label="Expand side panel">
        <svg width="5" height="8" viewBox="0 0 5 8"><path d="M1 0.5L4.5 4 1 7.5z" fill="#555" /></svg>
      </PanelToggle>
      <LayerTile />
      <MapControls>
        <MapControl type="button" aria-label="Show your location">
          <svg width="14" height="14" viewBox="0 0 14 14" fill="none" stroke="#666" strokeWidth="1.3">
            <circle cx="7" cy="7" r="4.6" />
            <circle cx="7" cy="7" r="2.6" fill="#666" stroke="none" />
            <path d="M7 0v2.4M7 11.6V14M0 7h2.4M11.6 7H14" />
          </svg>
        </MapControl>
        <ZoomControl>
          <svg width="16" height="48" viewBox="0 0 16 48" fill="none" stroke="#666" strokeWidth="2">
            <path d="M8 7.7v8M4 11.7h8M4 35.2h8" />
            <path d="M0 23.5h16" stroke="#e2e2e2" strokeWidth="1" />
          </svg>
        </ZoomControl>
        <MapControl type="button" aria-label="Street view">
          <svg width="10" height="17" viewBox="0 0 10 17">
            <circle cx="5" cy="3.2" r="2.6" fill="#fbb12b" />
            <path d="M1.4 6h7.2l.6 6H7.4L7 16.5H3L2.6 12H.8z" fill="#f5a11d" />
            <path d="M3 6l2 2.4L7 6z" fill="#d9531e" />
          </svg>
        </MapControl>
      </MapControls>
    </MapFrame>
  );
}

/* ---------- footer ---------- */

const Footer = styled.footer`
  flex: none;
  height: 363px;
  margin-top: 113px;
  background: ${GREEN};
  color: #fff;
`;

const FooterTop = styled.div`
  display: flex;
  justify-content: space-between;
  height: 272px;
  padding: 15px 107px 0 45px;
`;

const FollowRow = styled.div`
  display: flex;
  align-items: flex-start;
  align-self: flex-start;
  margin-top: 108px;
`;

const FooterHeading = styled.h2`
  padding-top: ${(p) => (p.$lowered ? 1 : 0)}px;
  height: 48px;
  font-size: 40px;
  font-weight: 600;
  line-height: 48px;
  white-space: nowrap;
`;

const FollowHeading = styled(FooterHeading)`
  width: 209px;
  letter-spacing: -0.1px;
`;

const SocialLinks = styled.div`
  display: flex;
  gap: 7px;
  margin-top: 2px;
`;

const SocialIcon = styled.svg`
  display: block;
  width: 41px;
  height: 41px;
  overflow: visible;
`;

const Subscribe = styled.form`
  display: flex;
  flex-direction: column;
  width: 395px;
`;

const SubscribeField = styled.label`
  height: 45px;
  margin-bottom: ${(p) => p.$after}px;
  padding: ${(p) => p.$pad};
  border-radius: 10px;
  background: #d9d9d9;
  color: #000;
  font-size: 25px;
  font-weight: 600;
  line-height: 30px;
`;

const SubmitButton = styled.button`
  width: 193px;
  height: 48px;
  margin-left: 99px;
  padding-right: 4px;
  border-radius: 24px;
  background: #59595b;
  color: #fff;
  font-size: 25px;
  font-weight: 600;
  line-height: 30px;
`;

const Copyright = styled.p`
  padding-left: 24px;
  font-size: 25px;
  font-weight: 600;
  letter-spacing: -0.05px;
  line-height: 30px;
  text-align: center;
`;

function Facebook() {
  return (
    <SocialIcon viewBox="0 0 41 41">
      <circle cx="20.5" cy="20.5" r="20.5" fill="#537abd" />
      <rect x="13" y="13" width="15" height="15" rx="1" fill="#fff" />
      <path d="M21.6 28v-5.6h-2v-2.3h2v-1.7c0-2.1 1.2-3.1 3.1-3.1h1.7v2.2h-1.1c-.9 0-1.2.4-1.2 1.2v1.4h2.3l-.3 2.3h-2V28z" fill="#537abd" />
    </SocialIcon>
  );
}

function Instagram() {
  return (
    <SocialIcon viewBox="0 0 41 41">
      <defs>
        <linearGradient id="insta" x1="0.1" y1="0.95" x2="0.85" y2="0.1">
          <stop offset=".05" stopColor="#ffb400" />
          <stop offset=".5" stopColor="#cc4f7c" />
          <stop offset="1" stopColor="#9500f0" />
        </linearGradient>
      </defs>
      <circle cx="20.5" cy="20.5" r="20.5" fill="url(#insta)" />
      <rect x="8" y="8.5" width="25" height="24.5" rx="6" fill="none" stroke="#fff" strokeWidth="1.8" />
      <circle cx="20.5" cy="20.7" r="6" fill="none" stroke="#fff" strokeWidth="1.8" />
      <circle cx="27.5" cy="13.8" r="1.7" fill="#fff" />
    </SocialIcon>
  );
}

const YouText = styled.text`
  font-family: "Liberation Sans Narrow", Roboto, sans-serif;
  font-size: ${(p) => p.$size}px;
  font-weight: 700;
`;

function YouTube() {
  return (
    <SocialIcon viewBox="0 0 41 41">
      <circle cx="20.5" cy="20.5" r="20.5" fill="#e02a20" />
      <YouText $size={10} x="14" y="18" textLength="13" lengthAdjust="spacingAndGlyphs" fill="#fff">You</YouText>
      <rect x="11" y="19.5" width="19" height="11.5" rx="3" fill="#fff" />
      <YouText $size={10} x="13" y="28.8" textLength="15" lengthAdjust="spacingAndGlyphs" fill="#e02a20">Tube</YouText>
    </SocialIcon>
  );
}

function GoogleMaps() {
  return (
    <SocialIcon viewBox="0 0 41 41">
      <defs>
        <clipPath id="maps-disc"><circle cx="20.5" cy="20.5" r="20.5" /></clipPath>
      </defs>
      <g clipPath="url(#maps-disc)">
        <rect width="41" height="41" fill="#42a15a" />
        <path d="M0 31L16 20 30 41H0z" fill="#3e9be4" />
        <path d="M16 20L28 9 41 12V41H30z" fill="#87868f" />
        <path d="M33 12h8v29H28q9-10 5-29z" fill="#74737c" />
        <path d="M0 28.5L25 10.5 28 14 2 32z" fill="#ffcf00" />
        <path d="M15 21.5L18.5 19 31 37 27.5 40z" fill="#fff" />
      </g>
      <path d="M31 20.500C29 15 23 12.500 23 7.500A8 8 0 0 1 39.500 7.500C39.500 12.500 33 15 31 20.500Z" fill="#cc2900" />
      <circle cx="31.2" cy="7.3" r="3.5" fill="#801c00" />
      <path d="M14.200 8.300A3.700 3.700 0 1 0 15 11.200H11.400" fill="none" stroke="#fff" strokeWidth="1.5" />
    </SocialIcon>
  );
}

const NAV = ["HOME", "ABOUT US", "SERVICES", "GALLERY", "CONTACT US"];

export default function App() {
  return (
    <Page>
      <GlobalStyle />
      <TopBar />
      <Header>
        <Logo />
        <Nav>
          {NAV.map((item) => <NavLink key={item}>{item}</NavLink>)}
          <PillButton type="button" $raised>DONATE</PillButton>
        </Nav>
      </Header>
      <PageTitle>Contact Us</PageTitle>

      <ContactSection>
        <ContactForm>
          <Field $top={20}>Name</Field>
          <Field $top={19}>Email</Field>
          <Field $top={21}>Contact</Field>
          <Field $area $top={17}>Message</Field>
          <SendButton type="button">SEND</SendButton>
        </ContactForm>
        <Details>
          <DetailHeading $gap={10}>ADDRESS</DetailHeading>
          <DetailText $after={20}>
            Sy.No. 18/2, K. Chudahalli, Somanahalli Post, Near Guhantara Resort &amp; KMS Farm, Uttarahalli Hobli,
            Kanakapura Main Road, Bangalore - 560 082
          </DetailText>
          <DetailHeading $gap={1}>E-MAIL</DetailHeading>
          <DetailText $strong $after={36}>wsatrustindia@gmail.com</DetailText>
          <DetailHeading $gap={3}>Mobile</DetailHeading>
          <DetailText $strong $spacing={0.2} $after={0}>+91-9632300046</DetailText>
        </Details>
      </ContactSection>

      <LocationMap />

      <Footer>
        <FooterTop>
          <FollowRow>
            <FollowHeading>Follow Us</FollowHeading>
            <SocialLinks>
              <Facebook />
              <Instagram />
              <YouTube />
              <GoogleMaps />
            </SocialLinks>
          </FollowRow>
          <Subscribe>
            <FooterHeading $lowered>Subscribe</FooterHeading>
            <SubscribeField $pad="7px 0 0 17px" $after={17}>Name</SubscribeField>
            <SubscribeField $pad="8px 0 0 12px" $after={12}>Email</SubscribeField>
            <SubmitButton type="button">Submit</SubmitButton>
          </Subscribe>
        </FooterTop>
        <Copyright>
          © 2020. We Save Animals (WSA) Welfare Trust.
          <br />
          All Rights Reserved.
        </Copyright>
      </Footer>
    </Page>
  );
}
